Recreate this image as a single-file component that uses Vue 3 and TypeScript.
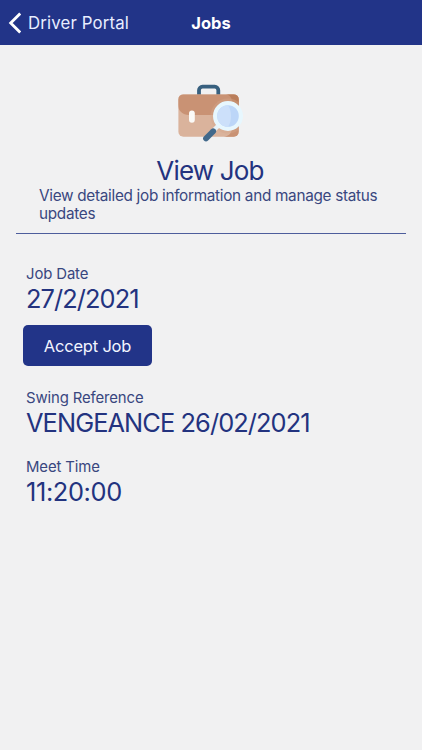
<script setup lang="ts">
interface Field {
  label: string
  value: string
  name: string
  action?: string
}

const fields: Field[] = [
  { name: 'date', label: 'Job Date', value: '27/2/2021', action: 'Accept Job' },
  { name: 'swing', label: 'Swing Reference', value: 'VENGEANCE 26/02/2021' },
  { name: 'meet', label: 'Meet Time', value: '11:20:00' },
]
</script>

<template>
  <div class="screen">
    <header class="nav">
      <a class="back">
        <svg class="chevron" viewBox="0 0 13 22" width="13" height="22">
          <path d="M12.200 1.500 2.700 11l9.500 9.500" fill="none" stroke="#fff" stroke-width="2.800" />
        </svg>
        <span class="back-label">Driver Portal</span>
      </a>
      <h1 class="nav-title">Jobs</h1>
    </header>

    <main>
      <section class="intro">
        <svg class="case" viewBox="0 0 68 60" width="68" height="60">
          <defs>
            <clipPath id="case-body"><rect x="1.4" y="10.4" width="60.300" height="42.400" rx="5" /></clipPath>
          </defs>
          <path d="M22 12V6.200a3.500 3.500 0 0 1 3.500-3.500h12.300a3.500 3.500 0 0 1 3.500 3.500V12" fill="none" stroke="#38607f" stroke-width="3.800" />
          <g clip-path="url(#case-body)">
            <rect x="1" y="10" width="62" height="45" fill="#dab39c" />
            <path d="M1 10h61v21H12C5.500 31 1 26.500 1 21Z" fill="#c99274" />
            <path d="M49 10c4 1 6 4 6 9v12h8V10Z" fill="#ba7e5b" />
            <path d="M47 53c5-1 8-4 8-10V31h8v22Z" fill="#c99274" />
            <circle cx="51" cy="32" r="17.500" fill="#d5a78d" opacity=".4" />
          </g>
          <rect x="12" y="26.500" width="5.800" height="12.200" rx="2.900" fill="#fbfaf7" />
          <path d="m42 41-5 5" stroke="#e8f2f6" stroke-width="4.500" />
          <path d="m36.200 47.300-7.200 7.200" stroke="#42698b" stroke-width="5.800" stroke-linecap="round" />
          <circle cx="51" cy="32" r="12.900" fill="#bcd6f8" stroke="#e7f7fe" stroke-width="4.200" />
          <path d="M51 21.200a10.800 10.800 0 0 0 0 21.600c4-5.500 4-16.100 0-21.600Z" fill="#cce0fa" />
        </svg>
        <h2 class="title">View Job</h2>
        <p class="description">View detailed job information and manage status updates</p>
      </section>

      <section class="details">
        <div v-for="field in fields" :key="field.name" class="field">
          <div class="label">{{ field.label }}</div>
          <div class="value" :class="field.name">{{ field.value }}</div>
          <button v-if="field.action" class="action" type="button">{{ field.action }}</button>
        </div>
      </section>
    </main>
  </div>
</template>

<style>
body {
  background: #f1f1f2;
}
</style>

<style scoped>
.screen {
  min-height: 750px;
  box-sizing: border-box;
  background: #f1f1f2;
  color: #23337f;
  font-family: Inter, "Liberation Sans", sans-serif;
}

.nav {
  display: grid;
  grid-template-columns: 1fr auto 1fr;
  align-items: center;
  height: 45px;
  box-sizing: border-box;
  padding: 1px 0 0 8px;
  background: #223488;
  color: #fff;
}

.back {
  display: flex;
  align-items: center;
  gap: 7px;
  color: #e8edff;
}

.back-label {
  font-size: 16.8px;
  line-height: 22px;
  letter-spacing: 0.16px;
  white-space: nowrap;
}

.nav-title {
  margin: 0 8px 0 0;
  font-size: 16.5px;
  line-height: 22px;
  font-weight: 700;
}

.intro {
  display: flex;
  flex-direction: column;
  align-items: center;
  margin: 0 16px;
  padding-top: 39px;
  border-bottom: 1px solid #4d5d9c;
  height: 149px;
}

.case {
  display: block;
}

.title {
  margin: 11px 2px 0 0;
  font-size: 26px;
  line-height: 32px;
  font-weight: 400;
  letter-spacing: -0.8px;
}

.description {
  align-self: stretch;
  margin: 0 20px 0 23px;
  font-size: 15.3px;
  line-height: 18px;
  letter-spacing: -0.29px;
  color: #39477f;
}

.details {
  display: flex;
  flex-direction: column;
  gap: 20px;
  padding: 30px 26px 0;
}

.label {
  font-size: 14.9px;
  line-height: 20px;
  letter-spacing: -0.12px;
  color: #39477f;
}

.value {
  font-size: 25.4px;
  line-height: 29px;
  letter-spacing: -0.92px;
  white-space: nowrap;
}

.value.meet {
  letter-spacing: -0.38px;
}

.action {
  display: block;
  width: 129px;
  height: 41px;
  margin: 12px 0 2px -3px;
  padding: 0;
  border: 0;
  border-radius: 5px;
  background: #223488;
  color: #f2f5ff;
  font: 400 16.5px/22px Inter, "Liberation Sans", sans-serif;
  letter-spacing: -0.2px;
}
</style>
